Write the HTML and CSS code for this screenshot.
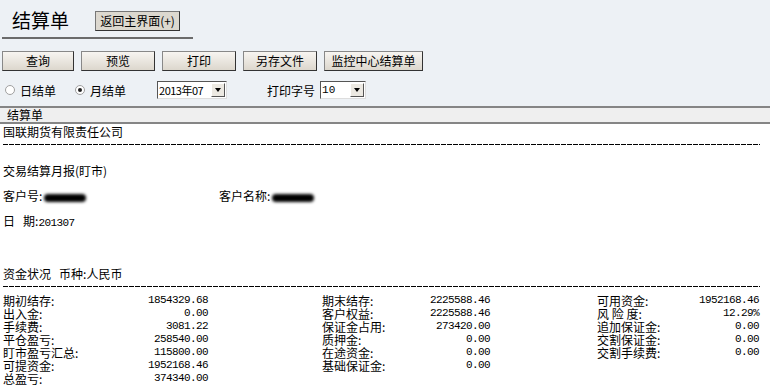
FILE: index.html
```html
<!doctype html>
<html lang="zh-CN">
<head>
  <meta charset="UTF-8">
  <title>结算单</title>
  <link rel="stylesheet" href="styles.css">
</head>
<body>

  <div class="top">
    <div class="title-row">
      <h1>结算单</h1>
      <span class="btn-back">返回主界面(+)</span>
    </div>
    <div class="title-line"></div>

    <div class="toolbar">
      <span class="btn w72">查询</span>
      <span class="btn w74">预览</span>
      <span class="btn w74">打印</span>
      <span class="btn w74">另存文件</span>
      <span class="btn w99">监控中心结算单</span>
    </div>

    <div class="options">
      <span class="radio"></span><span class="opt-label">日结单</span>
      <span class="radio checked"></span><span class="opt-label">月结单</span>
      <span class="select sel-month">2013年07<span class="arrow"></span></span>
      <span class="font-label">打印字号</span>
      <span class="select sel-size">10<span class="arrow"></span></span>
    </div>
  </div>

  <div class="tab-bar">结算单</div>

  <div class="report">
    <div class="line company">国联期货有限责任公司</div>
    <div class="dash dash1"></div>
    <div class="line title2">交易结算月报(盯市)</div>
    <div class="line client">
      <span class="client-no">客户号:<span class="blot"></span></span>
      <span class="client-name">客户名称:<span class="blot"></span></span>
    </div>
    <div class="line date">日&nbsp;&nbsp;&nbsp;期:<span class="num">201307</span></div>
    <div class="line funds-title">资金状况&nbsp;&nbsp;&nbsp;币种:人民币</div>
    <div class="dash dash2"></div>

    <div class="funds">
      <div class="col col1">
        <div class="row"><span>期初结存:</span><span class="num">1854329.68</span></div>
        <div class="row"><span>出入金:</span><span class="num">0.00</span></div>
        <div class="row"><span>手续费:</span><span class="num">3081.22</span></div>
        <div class="row"><span>平仓盈亏:</span><span class="num">258540.00</span></div>
        <div class="row"><span>盯市盈亏汇总:</span><span class="num">115800.00</span></div>
        <div class="row"><span>可提资金:</span><span class="num">1952168.46</span></div>
        <div class="row"><span>总盈亏:</span><span class="num">374340.00</span></div>
      </div>
      <div class="col col2">
        <div class="row"><span>期末结存:</span><span class="num">2225588.46</span></div>
        <div class="row"><span>客户权益:</span><span class="num">2225588.46</span></div>
        <div class="row"><span>保证金占用:</span><span class="num">273420.00</span></div>
        <div class="row"><span>质押金:</span><span class="num">0.00</span></div>
        <div class="row"><span>在途资金:</span><span class="num">0.00</span></div>
        <div class="row"><span>基础保证金:</span><span class="num">0.00</span></div>
      </div>
      <div class="col col3">
        <div class="row"><span>可用资金:</span><span class="num">1952168.46</span></div>
        <div class="row"><span>风&nbsp;险&nbsp;度:</span><span class="num">12.29%</span></div>
        <div class="row"><span>追加保证金:</span><span class="num">0.00</span></div>
        <div class="row"><span>交割保证金:</span><span class="num">0.00</span></div>
        <div class="row"><span>交割手续费:</span><span class="num">0.00</span></div>
      </div>
    </div>
  </div>

</body>
</html>
```

FILE: styles.css
```css
body {
  margin: 0;
  font-family: "Noto Sans CJK SC", sans-serif;
  font-size: 12px;
  color: #000;
  background: #fff;
}
.num {
  font-family: "Liberation Mono", monospace;
  font-size: 11px;
  letter-spacing: -0.6px;
}

/* top panel */
.top {
  background: #edf1f5;
  height: 106px;
  overflow: hidden;
}
.title-row {
  display: flex;
  align-items: center;
  padding: 9px 0 0 12px;
  height: 22px;
}
h1 {
  margin: 0;
  font-size: 19px;
  font-weight: 400;
  line-height: 22px;
}
.btn-back {
  margin-left: 26px;
  margin-top: 2px;
  height: 18px;
  line-height: 18px;
  padding: 0 2px;
  width: 79px;
  text-align: center;
  background: #dcd8cf;
  border: 1px solid #333;
  border-color: #777 #333 #333 #777;
  font-size: 12px;
}
.title-line {
  margin: 6px 0 0 2px;
  width: 191px;
  height: 2px;
  background: #6b6b6b;
}

.toolbar {
  display: flex;
  gap: 7px;
  margin-top: 12px;
  padding-left: 2px;
}
.btn {
  box-sizing: border-box;
  height: 20px;
  line-height: 18px;
  text-align: center;
  background: linear-gradient(#f7f5f1, #dcd7cd);
  border: 1px solid #444;
  border-color: #888 #333 #333 #888;
}
.w72 { width: 72px; }
.w74 { width: 74px; }
.w99 { width: 99px; }

.options {
  display: flex;
  align-items: center;
  margin-top: 10px;
  height: 18px;
}
.radio {
  box-sizing: border-box;
  width: 10px;
  height: 10px;
  margin-left: 5px;
  border-radius: 50%;
  border: 1px solid #a0a0a0;
  background: #fff;
  position: relative;
}
.radio + .opt-label { margin-left: 5px; }
.radio.checked { margin-left: 19px; }
.radio.checked::after {
  content: "";
  position: absolute;
  left: 2px;
  top: 2px;
  width: 4px;
  height: 4px;
  border-radius: 50%;
  background: #222;
}
.select {
  box-sizing: border-box;
  display: flex;
  align-items: center;
  height: 18px;
  background: #fff;
  border: 1px solid #7a7a7a;
  border-color: #555 #ddd #ddd #555;
  padding-left: 1px;
  position: relative;
  font-family: "Liberation Mono", "Noto Sans CJK SC", monospace;
  font-size: 11px;
}
.sel-month { width: 70px; margin-left: 31px; font-family: "Noto Sans CJK SC", sans-serif; letter-spacing: -0.5px; }
.sel-size { width: 46px; margin-left: 5px; }
.font-label { margin-left: 40px; }
.arrow {
  position: absolute;
  right: 1px;
  top: 1px;
  width: 14px;
  height: 14px;
  box-sizing: border-box;
  background: #ece9e2;
  border: 1px solid #888;
  border-color: #fff #555 #555 #fff;
}
.arrow::after {
  content: "";
  position: absolute;
  left: 3px;
  top: 4px;
  border-left: 3px solid transparent;
  border-right: 3px solid transparent;
  border-top: 4px solid #000;
}

.tab-bar {
  border-top: 2px solid #858585;
  border-bottom: 2px solid #858585;
  background: #efefef;
  height: 14px;
  line-height: 14px;
  padding-left: 7px;
}

/* report */
.report {
  padding-left: 3px;
}
.line {
  height: 14px;
  line-height: 14px;
  white-space: nowrap;
}
.company { margin-top: 1px; }
.dash {
  width: 757px;
  height: 1px;
  background: repeating-linear-gradient(90deg, #000 0 5px, transparent 5px 6px);
}
.dash1 { margin-top: 5px; }
.title2 { margin-top: 19px; }
.client { margin-top: 11px; display: flex; }
.client-no { width: 216px; }
.blot {
  display: inline-block;
  width: 42px;
  height: 8px;
  margin-left: 2px;
  vertical-align: middle;
  background: #000;
  border-radius: 4px;
  filter: blur(1.5px);
}
.date { margin-top: 11px; }
.funds-title { margin-top: 39px; }
.dash2 { margin-top: 5px; }

.funds {
  display: flex;
  margin-top: 7px;
}
.col .row {
  display: flex;
  justify-content: space-between;
  height: 13px;
  line-height: 13px;
  white-space: nowrap;
}
.col1 { width: 205px; }
.col2 { width: 168px; margin-left: 114px; }
.col3 { width: 162px; margin-left: 107px; }
```
